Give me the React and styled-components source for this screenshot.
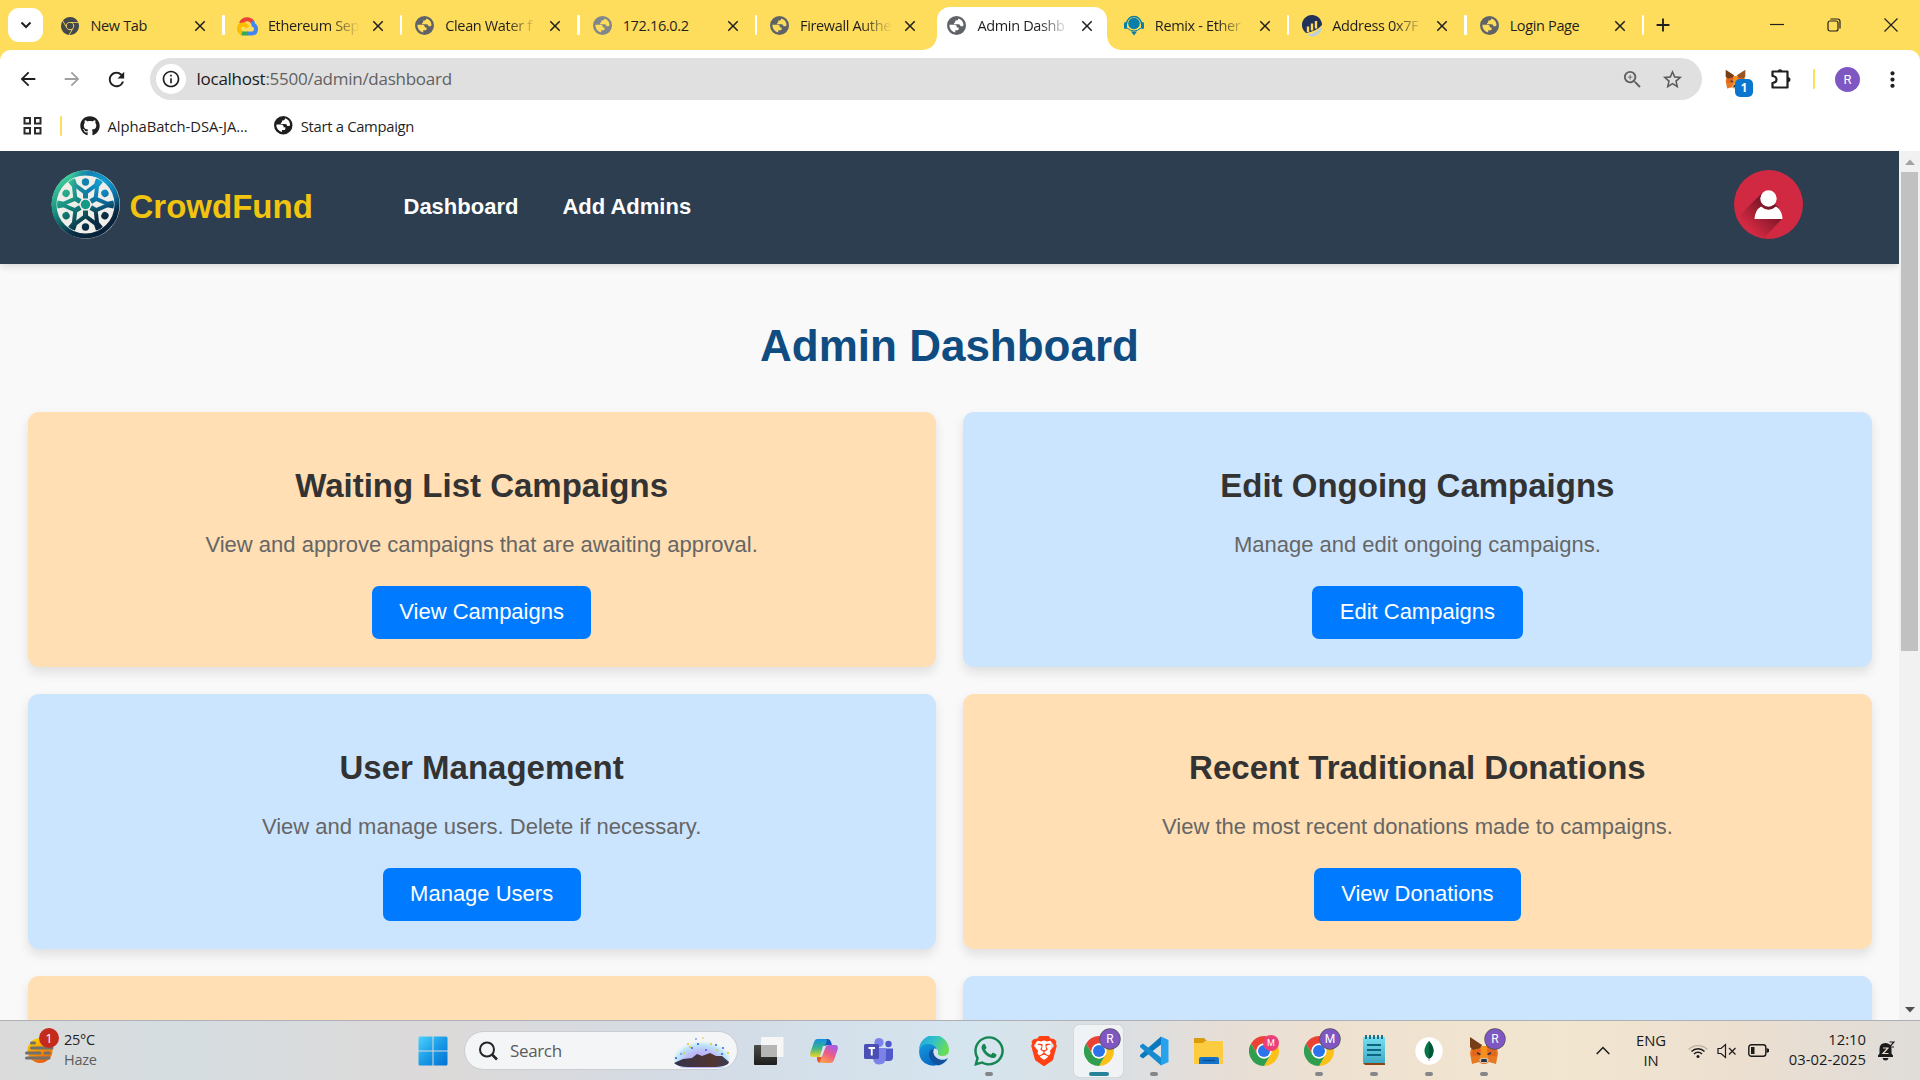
import React from "react";
import styled, { createGlobalStyle, css } from "styled-components";
import { MdStarBorder, MdZoomIn, MdRefresh, MdArrowBack, MdArrowForward, MdClose, MdAdd, MdMoreVert, MdInfoOutline } from "react-icons/md";
import { FaGithub, FaWhatsapp } from "react-icons/fa";
import { SiGooglechrome, SiBrave } from "react-icons/si";

const ui = `"Open Sans", "Noto Sans", sans-serif`;
const arial = `"Liberation Sans", Arial, sans-serif`;

const Global = createGlobalStyle`
  *, *::before, *::after { box-sizing: border-box; }
  body { margin: 0; overflow: hidden; background: #fff; }
  svg { display: block; flex: none; }
`;

const Screen = styled.div`
  width: 1920px;
  height: 1080px;
  display: flex;
  flex-direction: column;
  overflow: hidden;
  font-family: ${ui};
`;

/* ---------- browser tabs ---------- */

const TabStrip = styled.header`
  height: 50px;
  flex: none;
  display: flex;
  align-items: stretch;
  background: #ffdd5c;
  padding-left: 8px;
`;

const TabSearch = styled.button`
  width: 35px;
  height: 34px;
  margin: 8px 3.5px 0 0;
  padding: 0;
  border: 0;
  border-radius: 11px;
  background: #fff;
  display: grid;
  place-items: center;
`;

const Tab = styled.div`
  width: 177.4px;
  flex: none;
  display: flex;
  align-items: center;
  padding: 1px 14.5px 0 13.5px;
  position: relative;
  color: #1f1f1f;
  ${(p) =>
    p.$divided &&
    css`
      &::after {
        content: "";
        position: absolute;
        right: -1px;
        top: 15px;
        width: 2.5px;
        height: 20px;
        border-radius: 1px;
        background: #fff;
      }
    `}
  ${(p) =>
    p.$active &&
    css`
      &::before {
        content: "";
        position: absolute;
        left: 4px;
        right: 4px;
        top: 7px;
        bottom: 0;
        border-radius: 13px 13px 0 0;
        background: #fff;
      }
    `}
  > * {
    position: relative;
  }
`;

const TabCurve = styled.span`
  && {
    position: absolute;
  }
  bottom: 0;
  width: 14px;
  height: 14px;
  ${(p) =>
    p.$side === "left"
      ? "left: -10px; background: radial-gradient(circle at 0 0, transparent 13.5px, #fff 14px);"
      : "right: -10px; background: radial-gradient(circle at 100% 0, transparent 13.5px, #fff 14px);"}
`;

const Favicon = styled.span`
  width: 20px;
  height: 22px;
  margin-right: 10.5px;
  display: grid;
  place-items: center;
  color: ${(p) => p.$color || "#5f6368"};
`;

const TabTitle = styled.span`
  width: 98px;
  height: 24px;
  margin-right: auto;
  white-space: nowrap;
  font-size: 14.5px;
  line-height: 23px;
  letter-spacing: -0.35px;
  ${(p) => p.$fade && "mask-image: linear-gradient(90deg, #000 62px, transparent 92px);"}
`;

const NewTab = styled.div`
  width: 40px;
  display: grid;
  place-items: center;
  color: #1f1f1f;
`;

const WindowControls = styled.div`
  margin-left: auto;
  display: flex;
  padding-right: 1px;
`;

const WindowControl = styled.span`
  width: 57px;
  display: grid;
  place-items: center;
`;

/* ---------- toolbar ---------- */

const ToolbarWrap = styled.div`
  background: #ffdd5c;
  flex: none;
`;

const Toolbar = styled.div`
  height: 58px;
  display: flex;
  align-items: center;
  background: #fff;
  border-radius: 11px 11px 0 0;
  padding: 0 5px 0 5.5px;
`;

const ToolButton = styled.span`
  width: ${(p) => p.$w || 44.5}px;
  height: 40px;
  display: grid;
  place-items: center;
  color: ${(p) => p.$color || "#1f1f1f"};
`;

const AddressBar = styled.div`
  width: 1552px;
  height: 42px;
  margin-left: 11px;
  border-radius: 21px;
  background: #e0e0e0;
  display: flex;
  align-items: center;
  padding: 0 10px 0 6px;
`;

const SiteInfo = styled.span`
  width: 30px;
  height: 30px;
  border-radius: 50%;
  background: #fff;
  display: grid;
  place-items: center;
  color: #1f1f1f;
`;

const Url = styled.span`
  margin: 0 auto 0 10.5px;
  font-size: 17px;
  line-height: 26px;
  letter-spacing: -0.26px;
  color: #616161;
  b {
    font-weight: 400;
    color: #1a1a1a;
  }
`;

const ExtensionIcon = styled.span`
  position: relative;
  width: 46px;
  height: 40px;
  margin-left: 10px;
  display: grid;
  place-items: center;
`;

const ExtensionCount = styled.span`
  position: absolute;
  left: 23px;
  top: 20px;
  width: 18px;
  height: 18px;
  border-radius: 5px;
  background: #0b76cf;
  color: #fff;
  font: 700 11.5px/18px ${ui};
  text-align: center;
`;

const Divider = styled.span`
  width: 2.5px;
  height: 20px;
  background: #ffdd5c;
  border-radius: 1px;
  margin: ${(p) => p.$margin || 0};
`;

const Avatar = styled.span`
  width: 25px;
  height: 25px;
  margin-right: auto;
  border-radius: 50%;
  background: #7e57c2;
  color: #fff;
  font: 400 13px/25px Roboto, sans-serif;
  text-align: center;
`;

const Bookmarks = styled.div`
  height: 43px;
  flex: none;
  display: flex;
  align-items: center;
  background: #fff;
  padding: 0 0 8px 23px;
  color: #1f1f1f;
`;

const Bookmark = styled.span`
  display: flex;
  align-items: center;
  gap: 8px;
  margin-right: 26.5px;
  font-size: 14.8px;
  line-height: 24px;
  letter-spacing: ${(p) => p.$track}px;
  white-space: nowrap;
`;

/* ---------- page ---------- */

const Viewport = styled.div`
  height: 869px;
  flex: none;
  display: flex;
  overflow: hidden;
`;

const Page = styled.div`
  flex: 1;
  background: #f9f9f9;
  font-family: ${arial};
  overflow: hidden;
`;

const Nav = styled.nav`
  height: 113px;
  display: flex;
  align-items: flex-start;
  background: #2c3e50;
  padding: 19px 96px 0 50.5px;
  box-shadow: 0 3px 7px rgba(0, 0, 0, 0.12);
`;

const Brand = styled.span`
  margin: 18px 0 0 10px;
  width: 274px;
  font-size: 33px;
  line-height: 38px;
  font-weight: 700;
  color: #f1c40f;
`;

const NavLink = styled.a`
  margin: 24px 44px 0 0;
  font-size: 22px;
  line-height: 25px;
  font-weight: 700;
  color: #fff;
`;

const Profile = styled.span`
  margin-left: auto;
`;

const Main = styled.main`
  padding: 27.5px;
`;

const Title = styled.h1`
  margin: 29px 0 41.5px;
  font-size: 44px;
  line-height: 50px;
  text-align: center;
  color: #0f4c81;
`;

const Cards = styled.section`
  display: grid;
  grid-template-columns: 1fr 1fr;
  gap: 27.5px;
`;

const Card = styled.article`
  height: 254.7px;
  padding: 27.5px;
  border-radius: 11px;
  text-align: center;
  background: ${(p) => (p.$tone === "peach" ? "#ffdfb3" : "#cce5ff")};
  box-shadow: 0 5.5px 11px rgba(0, 0, 0, 0.1);
`;

const CardTitle = styled.h2`
  margin: 27.4px 0;
  font-size: 33px;
  line-height: 38px;
  color: #333;
`;

const CardText = styled.p`
  margin: 0 0 28.5px;
  font-size: 22px;
  line-height: 25px;
  color: #666;
`;

const CardButton = styled.button`
  height: 53px;
  padding: 0 27.5px 2px;
  border: 0;
  border-radius: 6.9px;
  background: #007bff;
  color: #fff;
  font: 400 22px/25px ${arial};
`;

const Scrollbar = styled.div`
  width: 21px;
  background: #f1f1f1;
  display: flex;
  flex-direction: column;
  align-items: center;
`;

const ScrollArrow = styled.span`
  height: 21px;
  display: grid;
  place-items: center;
`;

const ScrollThumb = styled.span`
  width: 17px;
  height: 479px;
  margin-bottom: auto;
  background: #c1c1c1;
`;

/* ---------- taskbar ---------- */

const Taskbar = styled.footer`
  height: 60px;
  flex: none;
  display: flex;
  align-items: center;
  border-top: 1px solid #adb0b5;
  background: linear-gradient(
    90deg,
    #dbdbda 0,
    #d5dde1 170px,
    #dadbdc 330px,
    #dcd9d9 450px,
    #d3dce7 720px,
    #d5e5ef 970px,
    #dbdfe2 1120px,
    #e6ded7 1220px,
    #eee1d0 1340px,
    #f2e6d0 1560px,
    #ecdfd0 1740px,
    #dfdcd9 1920px
  );
`;

const Weather = styled.div`
  position: relative;
  width: 405px;
  padding-left: 25px;
  display: flex;
  align-items: center;
  gap: 10px;
`;

const WeatherText = styled.span`
  display: flex;
  flex-direction: column;
  margin-top: -2px;
  font-size: 14.5px;
  line-height: 20px;
  letter-spacing: -0.25px;
  color: #222;
  small {
    font-size: 14.5px;
    color: #5d5d5d;
  }
`;

const WeatherBadge = styled.span`
  position: absolute;
  left: 39px;
  top: -4px;
  width: 20px;
  height: 20px;
  border-radius: 50%;
  background: #c42b1c;
  color: #fff;
  font: 400 13px/20px ${ui};
  text-align: center;
`;

const SearchBox = styled.div`
  width: 274px;
  height: 39px;
  margin: 0 3px 0 4px;
  border-radius: 20px;
  border: 1px solid #c9ccd0;
  background: #f4f5f6;
  display: flex;
  align-items: center;
  padding: 0 6px 0 13px;
  font-size: 17px;
  color: #5b5b5b;
  letter-spacing: -0.35px;
  span {
    margin: 0 auto 1px 12px;
  }
`;

const TaskbarApp = styled.span`
  position: relative;
  width: 49px;
  height: 52px;
  margin: 0 3px;
  border-radius: 5px;
  display: grid;
  place-items: center;
  ${(p) => p.$focused && "background: rgba(255,255,255,.6); box-shadow: 0 0 1px rgba(0,0,0,.3);"}
  ${(p) =>
    p.$running &&
    css`
      &::after {
        content: "";
        position: absolute;
        bottom: 1px;
        left: 50%;
        width: ${p.$focused ? 20 : 8}px;
        height: 4px;
        border-radius: 2px;
        transform: translateX(-50%);
        background: ${p.$focused ? "#26839a" : "#85868a"};
      }
    `}
`;

const ProfileBadge = styled.span`
  position: absolute;
  right: ${(p) => (p.$small ? 9 : 3)}px;
  top: ${(p) => (p.$small ? 10 : 4)}px;
  width: ${(p) => (p.$small ? 16 : 20)}px;
  height: ${(p) => (p.$small ? 16 : 20)}px;
  border-radius: 50%;
  background: ${(p) => (p.$small ? "#ec407a" : "#7e57c2")};
  box-shadow: ${(p) => (p.$small ? "none" : "0 0 0 .7px #565060")};
  color: #fff;
  font: 400 ${(p) => (p.$small ? 9 : 12)}px/${(p) => (p.$small ? 16 : 20)}px Roboto, sans-serif;
  text-align: center;
`;

const Tray = styled.div`
  margin-left: auto;
  display: flex;
  align-items: center;
  padding-right: 15px;
  color: #1b1b1b;
`;

const TrayText = styled.span`
  width: ${(p) => p.$w}px;
  display: flex;
  flex-direction: column;
  text-align: ${(p) => p.$align};
  font-size: 14.8px;
  line-height: 20px;
  letter-spacing: ${(p) => p.$track}px;
  margin-top: ${(p) => p.$up || 0}px;
`;

const TrayIcon = styled.span`
  width: ${(p) => p.$w}px;
  display: grid;
  place-items: center;
`;

/* ---------- drawings ---------- */

const ChromeLogo = () => (
  <svg width="30" height="30" viewBox="0 0 48 48">
    <path fill="#ea4335" d="M24 12H44.78A24 24 0 0 0 3.215 12L13.608 30A12 12 0 0 1 24 12z" />
    <path fill="#fbc116" d="M34.39 30 24 48A24 24 0 0 0 44.78 12H24A12 12 0 0 1 34.39 30z" />
    <path fill="#2f9e4f" d="M13.61 30 3.215 12A24 24 0 0 0 24 48L34.39 30A12 12 0 0 1 13.61 30z" />
    <circle cx="24" cy="24" r="12" fill="#fff" />
    <circle cx="24" cy="24" r="9.6" fill="#2a73ea" />
  </svg>
);

const FoxLogo = ({ size = 30 }) => (
  <svg width={size} height={size} viewBox="0 0 30 30">
    <path fill="#e8781f" d="M3 9 12 11h6l9-2 2 8-2 11-7-2-3 2h-4l-3-2-7 2-2-11z" />
    <path fill="#763d16" d="M1 1 13 9l-1 3-8 2-3-3z" />
    <path fill="#9a5524" d="M29 1 17 9l1 3 8 2 3-3z" />
    <path fill="#f5901f" d="M12 10h6l2 8-2 7h-6l-2-7z" />
    <path fill="#e2661b" d="m4 14 8-1-1 7-9 0zM26 14l-8-1 1 7 9 0z" />
    <path fill="#d7c1b3" d="m10 24 2-2h6l2 2-2 3h-6z" />
    <path fill="#233447" d="m8 16 4 2-1 1-3-1zM22 16l-4 2 1 1 3-1zM12.500 23h5l.5 3h-6z" />
  </svg>
);

const CloudLogo = () => (
  <svg width="21" height="20" viewBox="0 0 21 20">
    <g fill="none" strokeWidth="4" strokeLinejoin="round">
      <path stroke="#ea4335" d="M4 7.500A6.600 6.600 0 0 1 15.500 6" />
      <path stroke="#4285f4" d="M15 5.500Q16.500 7 16.500 9.200Q19 10 19 13Q19 17.500 15 17.500H10.500" />
      <path stroke="#34a853" d="M11 17.500H6L4.500 17" />
      <path stroke="#fbbc04" d="M5 17Q2 16 2 12.500Q2 8.500 6 8.500Q9 8.500 10.500 11.500" />
    </g>
  </svg>
);

const RemixLogo = () => (
  <svg width="20" height="21" viewBox="0 0 20 21">
    <circle cx="10" cy="8.500" r="5.800" fill="#087fa9" />
    <path d="M2.500 9A7.500 7.500 0 0 1 17.500 9" fill="none" stroke="#087fa9" strokeWidth="1.300" />
    <rect x="0" y="7" width="3" height="7" rx="1.500" fill="#087fa9" />
    <rect x="17" y="7" width="3" height="7" rx="1.500" fill="#087fa9" />
    <path d="M3 13Q10 19 17 13" fill="none" stroke="#087fa9" strokeWidth="1" />
    <path d="m7 16.500 6 0-3 4z" fill="#087fa9" />
  </svg>
);

const EtherscanLogo = () => (
  <svg width="21" height="22" viewBox="0 0 21 22">
    <path d="M4 18A10 10 0 1 1 20 10Q15 16 4 18z" fill="#21325b" />
    <path d="M5 20Q16 18 20 11A10 10 0 0 1 5 20z" fill="#b9d0e2" />
    <path d="M6 17V11.500M10 15.500V8.500M14 13.500V6" stroke="#fdd95c" strokeWidth="2.400" />
  </svg>
);

const Globe = ({ size = 19 }) => (
  <svg width={size} height={size} viewBox="0 0 18 18">
    <path
      fill="currentColor"
      fillRule="evenodd"
      d="M9 0A9 9 0 1 1 9 18A9 9 0 1 1 9 0zM2.300 8.300H7Q9.300 8.300 9.300 10.200V11H11V12.600Q11 13.600 9.800 13.600H7.800V15.600A6.800 6.800 0 0 1 2.300 8.300zM10.800 2.300Q10.700 4.300 9 4.300H7.800V5.600Q7.800 6.500 6.700 6.500V7.700H10.800Q12.800 7.700 12.800 9.800H14.500Q15.500 9.800 15.600 8.200A6.800 6.800 0 0 0 10.800 2.300z"
    />
  </svg>
);

const Puzzle = () => (
  <svg width="22" height="24" viewBox="0 0 22 24">
    <path
      d="M2.500 4.500H17.500V20.500H2.500V16Q6.500 15.500 6.500 12.500T2.500 9z"
      fill="none"
      stroke="#1f1f1f"
      strokeWidth="2.200"
      strokeLinejoin="round"
    />
    <path d="M7.500 4.500A2.600 3 0 0 1 12.500 4.500zM17.500 10A3 2.600 0 0 1 17.500 15.200z" fill="#1f1f1f" />
  </svg>
);

const CrowdLogo = () => (
  <svg width="69" height="69" viewBox="18 17 206 206">
    <defs>
      <linearGradient id="crowd" x1="50" y1="40" x2="150" y2="205" gradientUnits="userSpaceOnUse">
        <stop offset="0" stopColor="#3fd09b" />
        <stop offset=".45" stopColor="#13877c" />
        <stop offset=".8" stopColor="#0a3147" />
        <stop offset="1" stopColor="#09223a" />
      </linearGradient>
      <radialGradient id="sky" cx="170" cy="55" r="95" gradientUnits="userSpaceOnUse">
        <stop offset="0" stopColor="#14a5d6" />
        <stop offset=".5" stopColor="#0b78b8" stopOpacity=".85" />
        <stop offset="1" stopColor="#0b6db1" stopOpacity="0" />
      </radialGradient>
      <mask id="people" maskUnits="userSpaceOnUse" x="18" y="17" width="206" height="206">
        <g fill="#fff" stroke="#fff">
          {[0, 60, 120, 180, 240, 300].map((a) => (
            <g key={a} transform={`rotate(${a} 121 120)`}>
              <path d="M84 44 90 62 121 85 152 62 158 44" fill="none" strokeWidth="12" strokeLinejoin="round" />
              <path d="M121 82V102" fill="none" strokeWidth="15" />
              <circle cx="121" cy="53" r="11" stroke="none" />
            </g>
          ))}
          <circle cx="121" cy="120" r="94" fill="none" strokeWidth="15" />
          <circle cx="121" cy="120" r="14" stroke="none" />
        </g>
      </mask>
    </defs>
    <circle cx="122" cy="120" r="102" fill="#d8d7d2" />
    <circle cx="121" cy="120" r="96" fill="#f0eee8" />
    <g mask="url(#people)">
      <rect x="18" y="17" width="206" height="206" fill="url(#crowd)" />
      <rect x="18" y="17" width="206" height="206" fill="url(#sky)" />
      <circle cx="121" cy="120" r="14" fill="#149a86" />
    </g>
  </svg>
);

const ProfileIcon = () => (
  <svg width="69" height="69" viewBox="0 0 69 69">
    <defs>
      <linearGradient id="cast" x1="38" y1="34" x2="15" y2="58" gradientUnits="userSpaceOnUse">
        <stop offset="0" stopColor="#6f1423" />
        <stop offset="1" stopColor="#d22942" />
      </linearGradient>
      <clipPath id="disc"><circle cx="34.500" cy="34.500" r="34.500" /></clipPath>
    </defs>
    <circle cx="34.500" cy="34.500" r="34.500" fill="#d22942" />
    <path clipPath="url(#disc)" d="M28 23 2 49 28 70 48 49 44 37z" fill="url(#cast)" />
    <circle cx="34.500" cy="28.500" r="8.200" fill="#fff" />
    <path d="M20.500 49Q21 40 27 36.500Q34.500 43 42 36.500Q48 40 48.500 49z" fill="#fff" />
  </svg>
);

const WindowsLogo = () => (
  <svg width="30" height="30" viewBox="0 0 30 30">
    <defs>
      <linearGradient id="win" x1="0" y1="0" x2="1" y2="1">
        <stop offset="0" stopColor="#4dd2ff" />
        <stop offset=".5" stopColor="#1a9be7" />
        <stop offset="1" stopColor="#0071d2" />
      </linearGradient>
    </defs>
    <path fill="url(#win)" d="M2 .5H14.500V14.500H.5V2Q.5.500 2 .5zM15.500.500H28Q29.500.500 29.500 2V14.500H15.500zM.5 15.500H14.500V29.500H2Q.5 29.500.5 28zM15.500 15.500H29.500V28Q29.500 29.500 28 29.500H15.500z" />
  </svg>
);

const Landscape = () => (
  <svg width="58" height="34" viewBox="0 0 58 34">
    <defs>
      <radialGradient id="glow" cx=".5" cy=".7" r=".55">
        <stop offset="0" stopColor="#b49df0" />
        <stop offset=".5" stopColor="#bbbdf8" />
        <stop offset=".8" stopColor="#bfe8fa" />
        <stop offset="1" stopColor="#eef6fa" stopOpacity="0" />
      </radialGradient>
      <linearGradient id="hill" x1="0" x2="1">
        <stop offset="0" stopColor="#32334f" />
        <stop offset=".7" stopColor="#52352f" />
        <stop offset="1" stopColor="#3b3a55" />
      </linearGradient>
    </defs>
    <ellipse cx="29" cy="20" rx="29" ry="20" fill="url(#glow)" />
    <path d="M1 29 10 25 19 24 24 20 29 22 37 19 43 22 49 22 56 28Q55 33 38 33H15Q5 33 1 29z" fill="url(#hill)" />
    <g fill="#3b63c4">
      <circle cx="3" cy="24" r="1.100" /><circle cx="19" cy="14" r="1" /><circle cx="25" cy="10" r="1.100" />
      <circle cx="43" cy="11" r="1" /><circle cx="33" cy="16" r="1" /><circle cx="49" cy="20" r="1.100" /><circle cx="23" cy="5" r=".8" />
      <circle cx="50" cy="14" r="1" /><circle cx="8" cy="20" r=".8" />
    </g>
    <g fill="#e9c52f">
      <circle cx="15" cy="10" r="1.100" /><circle cx="17" cy="13" r="1" /><circle cx="11" cy="19" r="1" />
      <circle cx="38" cy="10" r="1.100" /><circle cx="44" cy="16" r="1" /><circle cx="55" cy="19" r="1.100" /><circle cx="30" cy="4" r=".8" />
    </g>
  </svg>
);

const TaskView = () => (
  <svg width="31" height="30" viewBox="0 0 31 30">
    <defs>
      <linearGradient id="dark" x1="0" y1="0" x2="0" y2="1"><stop offset="0" stopColor="#4c4c4a" /><stop offset="1" stopColor="#1d1d1d" /></linearGradient>
    </defs>
    <rect x="1" y="9" width="23" height="20" rx="1" fill="url(#dark)" />
    <rect x="8" y="1" width="22.500" height="20" rx="1" fill="#f6f6f6" />
    <path d="M8 9H24V21H8z" fill="#b5b5b4" />
  </svg>
);

const Copilot = () => (
  <svg width="30" height="28" viewBox="0 0 30 28">
    <defs>
      <linearGradient id="cpa" x1="0" y1="0" x2="0" y2="1"><stop offset="0" stopColor="#168fe0" /><stop offset=".5" stopColor="#37b48d" /><stop offset="1" stopColor="#f1d51d" /></linearGradient>
      <linearGradient id="cpb" x1=".7" y1="0" x2=".2" y2="1"><stop offset="0" stopColor="#a55be8" /><stop offset=".5" stopColor="#ec5c86" /><stop offset="1" stopColor="#fba04c" /></linearGradient>
    </defs>
    <path d="M15 2H19Q21 2 22 5L23 8H18Q16 8 15 12z" fill="#1457c0" />
    <path d="M8 2H16Q19 2 17.500 5L12 18Q11 20 9 20H4Q0 20 1.500 15L5 5Q6 2 8 2z" fill="url(#cpa)" />
    <path d="M8 20H13L11 26Q9 26 8 23z" fill="#e4562d" />
    <path d="M20 8H26Q30 8 28.500 13L25 23Q24 26 21 26H13Q10 26 12 22L16 11Q17 8 20 8z" fill="url(#cpb)" />
    <path d="M14 9H17L13 19H11z" fill="#d9e2ee" />
  </svg>
);

const Teams = () => (
  <svg width="31" height="28" viewBox="0 0 31 28">
    <circle cx="16" cy="5.500" r="4.600" fill="#7b83eb" />
    <circle cx="25.500" cy="7" r="3.200" fill="#5059c9" />
    <path d="M22 11.500H30V20Q30 24 26 24H22z" fill="#5059c9" />
    <path d="M10 11H23V20Q23 27.500 16 27.500Q11 27.500 10 22z" fill="#7b83eb" />
    <rect x="1" y="7" width="15" height="15" rx="1.500" fill="#4b4fb5" />
    <path d="M5.500 11H12M8.750 11V18.500" stroke="#fff" strokeWidth="1.900" />
  </svg>
);

const Edge = () => (
  <svg width="30" height="30" viewBox="0 0 30 30">
    <defs>
      <linearGradient id="eg1" x1="0" y1="0" x2="1" y2=".4"><stop offset="0" stopColor="#1fa2d8" /><stop offset=".5" stopColor="#30c0cd" /><stop offset="1" stopColor="#67dc59" /></linearGradient>
      <linearGradient id="eg2" x1="0" y1="0" x2=".5" y2="1"><stop offset="0" stopColor="#159bdc" /><stop offset="1" stopColor="#0868c6" /></linearGradient>
    </defs>
    <path d="M0 14A15 15 0 0 1 30 14Q30 20 23 20Q18 20 19 16Q18 9 10 9Q3 9 0 14z" fill="url(#eg1)" />
    <path d="M0 15Q2 7 10 8Q17 9 18 14Q12 11 12 18Q13 26 22 27Q17 31 10 29Q0 26 0 15z" fill="url(#eg2)" />
    <path d="M15 12.500Q9 14 10 20Q12 27 19 29.500Q26 28 29 22Q25 24.500 20 23Q13 20 15 12.500z" fill="#11539c" />
    <path d="M15 12.500Q18 12 19 16Q18 20 23 20.500L28 20.500L27 23Q22 24.500 18 22Q13 18 15 12.500z" fill="#d5e3ee" />
  </svg>
);

const Brave = styled(SiBrave)`
  color: #ff4113;
  background: linear-gradient(#fff, #fff) center / 15px 19px no-repeat;
`;

const VsCode = () => (
  <svg width="30" height="30" viewBox="0 0 30 30">
    <path d="M22 .5 22 8.500 4 22.500 1 20.500V19z" fill="#0879be" />
    <path d="M22 29.500V21.500L4 7.500 1 9.500V11z" fill="#168bd0" />
    <path d="M22 .5 29.500 4V26L22 29.500z" fill="#27a3ee" />
  </svg>
);

const Explorer = () => (
  <svg width="31" height="28" viewBox="0 0 31 28">
    <path d="M1 1H11L14 4V9H1z" fill="#d99c0d" />
    <path d="M12 4H29Q30 4 30 5V27H1V6H10z" fill="#fccb3f" />
    <path d="M6 27V22Q6 20 8 20H24Q26 20 26 22V27z" fill="#1473c8" />
    <path d="M10 23.500H22" stroke="#0b4f96" strokeWidth="1.500" />
  </svg>
);

const Notepad = () => (
  <svg width="24" height="31" viewBox="0 0 24 31">
    <defs><linearGradient id="np" x1="0" y1="0" x2="0" y2="1"><stop offset="0" stopColor="#75dff0" /><stop offset="1" stopColor="#40a9c4" /></linearGradient></defs>
    <path d="M1 28H23V30H3z" fill="#8a4512" />
    <rect x="1" y="2" width="22" height="26" rx="1" fill="url(#np)" />
    <path d="M4 0V4M8 0V4M12 0V4M16 0V4M20 0V4" stroke="#0e637e" strokeWidth="1.800" />
    <path d="M5 10H19M5 15H19M5 20H19" stroke="#0e6581" strokeWidth="1.900" />
  </svg>
);

const Mongo = () => (
  <svg width="28" height="28" viewBox="0 0 28 28">
    <circle cx="14" cy="14" r="13.700" fill="#fff" />
    <path d="M14 4Q18.500 9 18.500 14T14 22Q9.500 19 9.500 14T14 4z" fill="#08744a" />
    <path d="M14 4Q18.500 9 18.500 14T14 22z" fill="#03553a" />
    <path d="M14 21V24" stroke="#8ca99e" strokeWidth="1" />
  </svg>
);

const Haze = () => (
  <svg width="29" height="27" viewBox="0 0 29 27">
    <defs><linearGradient id="sun" x1=".2" y1="0" x2=".6" y2="1"><stop offset="0" stopColor="#ffd400" /><stop offset="1" stopColor="#ea5c0c" /></linearGradient></defs>
    <circle cx="15" cy="13.500" r="12.500" fill="url(#sun)" />
    <path d="M6.500 6H9.500M6.500 11H27M1.500 16H15M20 16H24M1.500 21H24" stroke="#71706c" strokeWidth="3" strokeLinecap="round" />
  </svg>
);

const tabs = [
  { title: "New Tab", icon: <SiGooglechrome size={18} />, color: "#44484b", divided: true },
  { title: "Ethereum Sep", icon: <CloudLogo />, divided: true, fade: true },
  { title: "Clean Water f", icon: <Globe />, divided: true, fade: true },
  { title: "172.16.0.2", icon: <Globe />, color: "#80868b", divided: true },
  { title: "Firewall Authe", icon: <Globe />, fade: true },
  { title: "Admin Dashb", icon: <Globe />, active: true, fade: true },
  { title: "Remix - Ether", icon: <RemixLogo />, divided: true, fade: true },
  { title: "Address 0x7F", icon: <EtherscanLogo />, divided: true, fade: true },
  { title: "Login Page", icon: <Globe />, divided: true },
];

const cards = [
  { tone: "peach", title: "Waiting List Campaigns", text: "View and approve campaigns that are awaiting approval.", action: "View Campaigns" },
  { tone: "sky", title: "Edit Ongoing Campaigns", text: "Manage and edit ongoing campaigns.", action: "Edit Campaigns" },
  { tone: "sky", title: "User Management", text: "View and manage users. Delete if necessary.", action: "Manage Users" },
  { tone: "peach", title: "Recent Traditional Donations", text: "View the most recent donations made to campaigns.", action: "View Donations" },
  { tone: "peach" },
  { tone: "sky" },
];

const apps = [
  { icon: <TaskView /> },
  { icon: <Copilot /> },
  { icon: <Teams /> },
  { icon: <Edge /> },
  { icon: <FaWhatsapp size={34} color="#168653" />, running: true },
  { icon: <Brave size={30} /> },
  { icon: <ChromeLogo />, running: true, focused: true, badge: "R" },
  { icon: <VsCode />, running: true },
  { icon: <Explorer /> },
  { icon: <ChromeLogo />, badge: "M", small: true },
  { icon: <ChromeLogo />, running: true, badge: "M" },
  { icon: <Notepad />, running: true },
  { icon: <Mongo />, running: true },
  { icon: <FoxLogo />, running: true, badge: "R" },
];

export default function App() {
  return (
    <Screen>
      <Global />
      <TabStrip>
        <TabSearch>
          <svg width="12" height="8" viewBox="0 0 12 8"><path d="M1.500 1.500 6 6l4.500-4.500" fill="none" stroke="#1f1f1f" strokeWidth="2" /></svg>
        </TabSearch>
        {tabs.map((t) => (
          <Tab key={t.title} $active={t.active} $divided={t.divided}>
            {t.active && <TabCurve $side="left" />}
            {t.active && <TabCurve $side="right" />}
            <Favicon $color={t.color}>{t.icon}</Favicon>
            <TabTitle $fade={t.fade}>{t.title}</TabTitle>
            <MdClose size={18} />
          </Tab>
        ))}
        <NewTab><MdAdd size={22} /></NewTab>
        <WindowControls>
          <WindowControl><svg width="14" height="14" viewBox="0 0 14 14"><path d="M0 6.500H14" stroke="#1f1f1f" strokeWidth="1.200" /></svg></WindowControl>
          <WindowControl>
            <svg width="14" height="14" viewBox="0 0 14 14" fill="none" stroke="#1f1f1f" strokeWidth="1.200">
              <rect x="1" y="3" width="10" height="10" rx="2" /><path d="M3.500 1H10.500Q13 1 13 3.500V10.500" />
            </svg>
          </WindowControl>
          <WindowControl><svg width="14" height="14" viewBox="0 0 14 14"><path d="M.5.500 13.500 13.500M13.500.500.500 13.500" stroke="#1f1f1f" strokeWidth="1.200" /></svg></WindowControl>
        </WindowControls>
      </TabStrip>

      <ToolbarWrap>
        <Toolbar>
          <ToolButton><MdArrowBack size={22} /></ToolButton>
          <ToolButton $color="#a0a0a0"><MdArrowForward size={22} /></ToolButton>
          <ToolButton><MdRefresh size={23} /></ToolButton>
          <AddressBar>
            <SiteInfo><MdInfoOutline size={20} /></SiteInfo>
            <Url><b>localhost</b>:5500/admin/dashboard</Url>
            <ToolButton $w={40} $color="#616161"><MdZoomIn size={23} /></ToolButton>
            <ToolButton $w={40} $color="#5a5a5a"><MdStarBorder size={23} /></ToolButton>
          </AddressBar>
          <ExtensionIcon>
            <FoxLogo size={21} />
            <ExtensionCount>1</ExtensionCount>
          </ExtensionIcon>
          <ToolButton $w={46}><Puzzle /></ToolButton>
          <Divider $margin="0 20px 0 8.5px" />
          <Avatar>R</Avatar>
          <ToolButton><MdMoreVert size={25} /></ToolButton>
        </Toolbar>
      </ToolbarWrap>
      <Bookmarks>
        <svg width="19" height="18" viewBox="0 0 19 18" fill="none" stroke="#2b2b2b" strokeWidth="2">
          <rect x="1.500" y="1" width="5.500" height="5.500" /><rect x="12" y="1" width="5.500" height="5.500" />
          <rect x="1.500" y="11" width="5.500" height="5.500" /><rect x="12" y="11" width="5.500" height="5.500" />
        </svg>
        <Divider $margin="0 17.5px" />
        <Bookmark $track={-0.06}><FaGithub size={20} />AlphaBatch-DSA-JA...</Bookmark>
        <Bookmark $track={-0.3}><Globe size={18.5} />Start a Campaign</Bookmark>
      </Bookmarks>

      <Viewport>
        <Page>
          <Nav>
            <CrowdLogo />
            <Brand>CrowdFund</Brand>
            <NavLink>Dashboard</NavLink>
            <NavLink>Add Admins</NavLink>
            <Profile><ProfileIcon /></Profile>
          </Nav>
          <Main>
            <Title>Admin Dashboard</Title>
            <Cards>
              {cards.map((c, i) => (
                <Card key={i} $tone={c.tone}>
                  {c.title && <CardTitle>{c.title}</CardTitle>}
                  {c.text && <CardText>{c.text}</CardText>}
                  {c.action && <CardButton>{c.action}</CardButton>}
                </Card>
              ))}
            </Cards>
          </Main>
        </Page>
        <Scrollbar>
          <ScrollArrow><svg width="10" height="6" viewBox="0 0 10 6"><path d="M0 6 5 0.500 10 6z" fill="#a3a3a3" /></svg></ScrollArrow>
          <ScrollThumb />
          <ScrollArrow><svg width="10" height="6" viewBox="0 0 10 6"><path d="M0 0 5 5.500 10 0z" fill="#505050" /></svg></ScrollArrow>
        </Scrollbar>
      </Viewport>

      <Taskbar>
        <Weather>
          <Haze />
          <WeatherBadge>1</WeatherBadge>
          <WeatherText>25°C<small>Haze</small></WeatherText>
        </Weather>
        <TaskbarApp><WindowsLogo /></TaskbarApp>
        <SearchBox>
          <svg width="20" height="20" viewBox="0 0 20 20" fill="none" stroke="#262626" strokeWidth="2"><circle cx="9" cy="8.500" r="7" /><path d="m14 13.500 5 5" strokeWidth="2.600" /></svg>
          <span>Search</span>
          <Landscape />
        </SearchBox>
        {apps.map((a, i) => (
          <TaskbarApp key={i} $running={a.running} $focused={a.focused}>
            {a.icon}
            {a.badge && <ProfileBadge $small={a.small}>{a.badge}</ProfileBadge>}
          </TaskbarApp>
        ))}
        <Tray>
          <TrayIcon $w={30}><svg width="14" height="9" viewBox="0 0 14 9"><path d="m.7 8 6.300-6.500L13.300 8" fill="none" stroke="#1b1b1b" strokeWidth="1.500" /></svg></TrayIcon>
          <TrayText $w={66} $align="center" $track={-0.1} $up={-2}><span>ENG</span><span>IN</span></TrayText>
          <TrayIcon $w={28}>
            <svg width="20" height="16" viewBox="0 0 20 16" fill="none" stroke="#1b1b1b" strokeWidth="1.400">
              <path d="M.7 6.500A13 13 0 0 1 19.300 6.500" stroke="#b9b1a7" /><path d="M3.500 8.500A9 9 0 0 1 16.500 8.500M6 11A5.600 5.600 0 0 1 14 11" /><circle cx="10" cy="13.500" r="1.500" fill="#1b1b1b" stroke="none" />
            </svg>
          </TrayIcon>
          <TrayIcon $w={30}>
            <svg width="20" height="16" viewBox="0 0 20 16" fill="none" stroke="#1b1b1b" strokeWidth="1.200">
              <path d="M1 5.500H4L8.500 1.500V14.500L4 10.500H1z" /><path d="m12 5 6.500 6.500M18.500 5 12 11.500" />
            </svg>
          </TrayIcon>
          <TrayIcon $w={32}>
            <svg width="21" height="13" viewBox="0 0 21 13"><rect x=".8" y=".8" width="17" height="11.400" rx="2.500" fill="none" stroke="#1b1b1b" strokeWidth="1.400" /><path d="M3 3H6.500V10H3zM18.500 4 21 5V8L18.500 9z" fill="#1b1b1b" /></svg>
          </TrayIcon>
          <TrayText $w={92} $align="right" $track={0} $up={-4}><span>12:10</span><span>03-02-2025</span></TrayText>
          <TrayIcon $w={39}>
            <svg width="18" height="20" viewBox="0 0 18 20">
              <path d="M1 16V14.500L2.500 12.500V8Q2.500 2 8.500 2Q14 2 14.500 8V12.500L16 14.500V16z" fill="#1b1b1b" /><path d="M5.500 17H11.500Q11 19.500 8.500 19.500T5.500 17z" fill="#1b1b1b" />
              <path d="M6 7H11L6 12.500H11.500" fill="none" stroke="#ecdfd0" strokeWidth="1.200" /><path d="M12.500 1H17L12.500 6H17" fill="none" stroke="#1b1b1b" strokeWidth="1.200" />
            </svg>
          </TrayIcon>
        </Tray>
      </Taskbar>
    </Screen>
  );
}
